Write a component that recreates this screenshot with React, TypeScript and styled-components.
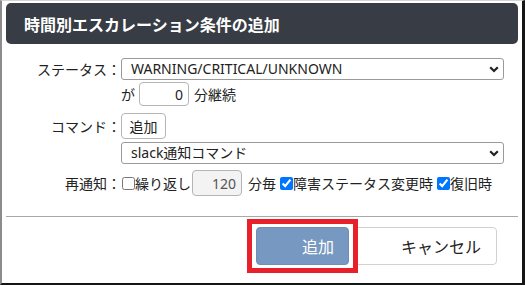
import React from 'react';
import styled, { createGlobalStyle } from 'styled-components';

const GlobalStyle = createGlobalStyle`
  body {
    margin: 0;
    background: #fff;
    font-family: "Noto Sans", "Noto Sans CJK JP", sans-serif;
    color: #222;
  }
`;

const Frame = styled.div`
  box-sizing: border-box;
  width: 525px;
  height: 285px;
  border-left: 2px solid #8c8c8c;
  border-top: 1px solid #d4d4d4;
  border-right: 3px solid #151515;
  border-bottom: 2px solid #151515;
  padding: 2px 4px 0 4px;
  display: flex;
  flex-direction: column;
  background: #fff;
`;

const Header = styled.div`
  height: 41px;
  flex: none;
  display: flex;
  align-items: center;
  padding-left: 18px;
  border-radius: 5px;
  background: #383d45;
  color: #fff;
  font-size: 16px;
  font-weight: 700;
`;

const Form = styled.div`
  display: flex;
  flex-direction: column;
  padding-top: 14px;
  font-size: 14px;
`;

const Row = styled.div<{ $gap?: number }>`
  display: flex;
  align-items: center;
  margin-top: ${(p) => p.$gap ?? 0}px;
`;

const Label = styled.div`
  width: 115px;
  flex: none;
  text-align: right;
  white-space: nowrap;
`;

const Field = styled.div`
  display: flex;
  align-items: center;
  width: 383px;
  white-space: nowrap;
`;

const SelectBox = styled.div`
  position: relative;
  width: 100%;
`;

const Select = styled.select`
  box-sizing: border-box;
  appearance: none;
  width: 100%;
  height: 22px;
  margin: 0;
  padding: 0 24px 0 9px;
  border: 1px solid #9a9a9a;
  border-radius: 3px;
  background: #fff;
  color: #222;
  font: inherit;
  font-size: 14px;
  line-height: 20px;
`;

const Chevron = styled.svg`
  position: absolute;
  right: 5px;
  top: 8px;
  pointer-events: none;
`;

const NumInput = styled.input<{ $muted?: boolean }>`
  box-sizing: border-box;
  width: 50px;
  height: ${(p) => (p.$muted ? 26 : 24)}px;
  margin: ${(p) => (p.$muted ? '0 6px 0 1px' : '0 5px 0 4px')};
  padding: 0 5px 0 4px;
  border: 1px solid #b5b5b5;
  border-radius: 4px;
  background: ${(p) => (p.$muted ? '#f3f3f3' : '#fff')};
  color: ${(p) => (p.$muted ? '#555' : '#222')};
  font: inherit;
  font-size: 14px;
  text-align: right;
`;

const SmallButton = styled.button`
  box-sizing: border-box;
  height: 26px;
  width: 45px;
  padding: 0;
  border: 1px solid #b5b5b5;
  border-radius: 4px;
  background: #fff;
  color: #222;
  font: inherit;
  font-size: 14px;
`;

const Check = styled.input<{ $first?: boolean }>`
  width: 13px;
  height: 13px;
  margin: 0 0 0 ${(p) => (p.$first ? 1 : 4)}px;
  accent-color: #0075ff;
`;

const Divider = styled.hr`
  width: 100%;
  margin: 20px 0 0;
  border: none;
  border-top: 1px solid #a8a8a8;
`;

const Footer = styled.div`
  display: flex;
  justify-content: flex-end;
  gap: 4px;
  padding: 10px 21px 0 0;
`;

const ActionButton = styled.button<{ $primary?: boolean; $w: number; $pl: number }>`
  position: relative;
  box-sizing: border-box;
  width: ${(p) => p.$w}px;
  height: 38px;
  padding: 0 0 0 ${(p) => p.$pl}px;
  text-align: left;
  border: 1px solid ${(p) => (p.$primary ? '#6f8fb5' : '#d2d2d2')};
  border-radius: 4px;
  background: ${(p) => (p.$primary ? '#7798c0' : '#fff')};
  color: ${(p) => (p.$primary ? '#fff' : '#222')};
  font: inherit;
  font-size: 16px;
  z-index: ${(p) => (p.$primary ? 1 : 0)};
`;

const Highlight = styled.span`
  position: absolute;
  left: -10px;
  right: -10px;
  top: -9px;
  bottom: -9px;
  border: 5px solid #e8202a;
  pointer-events: none;
`;

const ChevronIcon = () => (
  <Chevron width="10" height="7" viewBox="0 0 10 7">
    <polyline points="1.2,1.2 5,5 8.8,1.2" fill="none" stroke="#222" strokeWidth="2.2" />
  </Chevron>
);

const App: React.FC = () => {
  return (
    <>
      <GlobalStyle />
      <Frame>
        <Header>時間別エスカレーション条件の追加</Header>
        <Form>
          <Row>
            <Label>ステータス：</Label>
            <Field>
              <SelectBox>
                <Select defaultValue="all">
                  <option value="all">WARNING/CRITICAL/UNKNOWN</option>
                </Select>
                <ChevronIcon />
              </SelectBox>
            </Field>
          </Row>
          <Row $gap={2}>
            <Label />
            <Field>
              <span>が</span>
              <NumInput defaultValue="0" />
              <span>分継続</span>
            </Field>
          </Row>
          <Row $gap={7}>
            <Label>コマンド：</Label>
            <Field>
              <SmallButton>追加</SmallButton>
            </Field>
          </Row>
          <Row $gap={3}>
            <Label />
            <Field>
              <SelectBox>
                <Select defaultValue="slack">
                  <option value="slack">slack通知コマンド</option>
                </Select>
                <ChevronIcon />
              </SelectBox>
            </Field>
          </Row>
          <Row $gap={6}>
            <Label>再通知：</Label>
            <Field>
              <Check type="checkbox" $first />
              <span>繰り返し</span>
              <NumInput $muted defaultValue="120" />
              <span>分毎</span>
              <Check type="checkbox" defaultChecked />
              <span>障害ステータス変更時</span>
              <Check type="checkbox" defaultChecked />
              <span>復旧時</span>
            </Field>
          </Row>
        </Form>
        <Divider />
        <Footer>
          <ActionButton $primary $w={93} $pl={45}>
            追加
            <Highlight />
          </ActionButton>
          <ActionButton $w={144} $pl={47}>
            キャンセル
          </ActionButton>
        </Footer>
      </Frame>
    </>
  );
};

export default App;
